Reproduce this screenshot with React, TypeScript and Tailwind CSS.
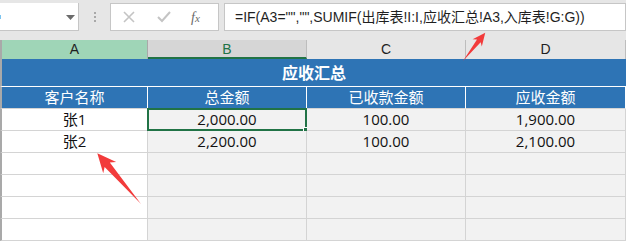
import React from 'react';

const cols = ['A', 'B', 'C', 'D'];
const headers = ['客户名称', '总金额', '已收款金额', '应收金额'];
const rows: string[][] = [
  ['张1', '2,000.00', '100.00', '1,900.00'],
  ['张2', '2,200.00', '100.00', '2,100.00'],
  ['', '', '', ''],
  ['', '', '', ''],
  ['', '', '', ''],
  ['', '', '', ''],
];

const font = { fontFamily: '"Liberation Sans", "Noto Sans CJK SC", sans-serif' };
const cellFont = { fontFamily: '"Open Sans", "Noto Sans CJK SC", sans-serif' };

function Arrow({ x, y, angle, len, head }: { x: number; y: number; angle: number; len: number; head: number }) {
  const hw = head * 0.45;
  const pts = [
    [0, 0],
    [len - head * 0.8, -head * 0.18],
    [len - head, -hw],
    [len, 0],
    [len - head, hw],
    [len - head * 0.8, head * 0.18],
  ]
    .map((p) => p.join(','))
    .join(' ');
  return (
    <g transform={`translate(${x} ${y}) rotate(${angle})`}>
      <polygon points={pts} fill="#f23b3b" />
    </g>
  );
}

export default function App() {
  return (
    <div className="relative w-[626px] h-[241px] overflow-hidden bg-white" style={font}>
      {/* Formula bar */}
      <div className="flex h-[40px] items-start bg-[#e6e6e6] pt-[3px]">
        <div className="relative h-[28px] w-[79px] border-b border-r border-[#c6c6c6] bg-white">
          <div className="absolute left-0 top-[12px] h-[4px] w-[1px] bg-[#7cc4ef]" />
          <svg className="absolute left-[66px] top-[12px]" width="9" height="5" viewBox="0 0 9 5">
            <polygon points="0,0 9,0 4.5,5" fill="#6b6b6b" />
          </svg>
        </div>
        <div className="flex w-[31px] flex-col items-center gap-[2px] pt-[9px]">
          <div className="h-[2px] w-[2px] bg-[#a8a8a8]" />
          <div className="h-[2px] w-[2px] bg-[#a8a8a8]" />
          <div className="h-[2px] w-[2px] bg-[#a8a8a8]" />
        </div>
        <div className="flex h-[28px] w-[109px] items-center border border-[#c6c6c6] bg-white">
          <svg className="ml-[12px]" width="12" height="12" viewBox="0 0 12 12">
            <path d="M1 1 L11 11 M11 1 L1 11" stroke="#c4c4c4" strokeWidth="1.6" />
          </svg>
          <svg className="ml-[22px]" width="14" height="12" viewBox="0 0 14 12">
            <path d="M1 6 L5 10 L13 1" stroke="#c4c4c4" strokeWidth="2" fill="none" />
          </svg>
          <span
            className="ml-[20px] text-[14px] italic text-[#6a6a6a]"
            style={{ fontFamily: '"Liberation Serif", serif' }}
          >
            f<span className="text-[11px]">x</span>
          </span>
        </div>
        <div className="ml-[5px] flex h-[28px] flex-1 items-center border border-[#c6c6c6] bg-white pl-[10px] text-[14px] text-[#1f1f1f]">
          =IF(A3="","",SUMIF(出库表!I:I,应收汇总!A3,入库表!G:G))
        </div>
      </div>

      {/* Sheet grid */}
      <div className="grid grid-cols-[148px_159px_159px_160px]">
        {cols.map((c, i) => (
          <div
            key={c}
            className={
              i === 0
                ? 'flex h-[19px] items-center justify-center border-l-2 border-r border-[#a9a9a9] bg-[#9fd5b7] text-[14px] text-[#1f1f1f]'
                : i === 1
                ? 'flex h-[19px] items-center justify-center border-b-2 border-r border-b-[#217346] border-r-[#bdbdbd] bg-[#d6d6d6] pt-[2px] text-[14px] text-[#217346]'
                : 'flex h-[19px] items-center justify-center border-r border-[#bdbdbd] bg-[#e6e6e6] text-[14px] text-[#1f1f1f]'
            }
          >
            {c}
          </div>
        ))}

        <div
          className="col-span-4 flex h-[28px] items-center justify-center border-b border-l-2 border-b-white border-l-[#a9a9a9] bg-[#2e74b5] text-[16px] font-bold text-white"
          style={cellFont}
        >
          应收汇总
        </div>

        {headers.map((h, i) => (
          <div
            key={h}
            className={`flex h-[22px] items-center justify-center border-b border-r border-b-[#d4d4d4] border-r-white bg-[#2e74b5] text-[15px] text-white ${
              i === 0 ? 'border-l-2 border-l-[#a9a9a9]' : ''
            }`}
            style={cellFont}
          >
            {h}
          </div>
        ))}

        {rows.map((r, ri) =>
          r.map((v, ci) => (
            <div
              key={`${ri}-${ci}`}
              className={`relative flex h-[22px] items-center justify-center border-b border-r border-[#d4d4d4] text-[15px] text-[#111] ${
                ci === 0 ? 'border-l-2 border-l-[#a9a9a9] bg-white' : 'bg-[#f2f2f2]'
              }`}
              style={cellFont}
            >
              {v}
              {ri === 0 && ci === 1 && (
                <div className="absolute -left-[1px] -top-[1px] h-[23px] w-[160px] border-2 border-[#217346]">
                  <div className="absolute -bottom-[3px] -right-[3px] h-[5px] w-[5px] border border-white bg-[#217346]" />
                </div>
              )}
            </div>
          ))
        )}
      </div>

      {/* Annotation arrows */}
      <svg className="pointer-events-none absolute left-0 top-0" width="626" height="241">
        <Arrow x={463} y={61} angle={-51.8} len={36} head={13} />
        <Arrow x={141} y={204} angle={-130.7} len={67} head={19} />
      </svg>
    </div>
  );
}
